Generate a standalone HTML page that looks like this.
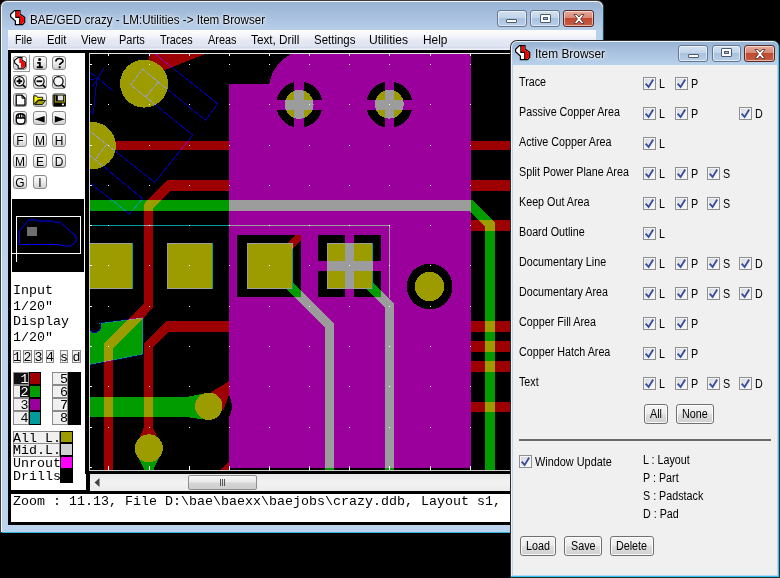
<!DOCTYPE html>
<html><head><meta charset="utf-8"><title>BAE</title>
<style>
html,body{margin:0;padding:0}
body{width:780px;height:578px;overflow:hidden;position:relative;background:#000;font-family:"Liberation Sans",sans-serif}
.a{position:absolute}
.t{position:absolute;white-space:pre;line-height:1;transform-origin:0 0}
.mono{font-family:"Liberation Mono",monospace;font-size:13.33px;color:#000;margin-top:0.8px}
.ms{font-family:"Liberation Sans",sans-serif;font-size:12px;color:#000;transform:scaleX(0.895)}
.seg{font-family:"Liberation Sans",sans-serif;font-size:12px;color:#000}
.tb{position:absolute;box-sizing:border-box;width:14px;height:14px;border:1px solid #8a8a8a;border-radius:3px;background:linear-gradient(#f8f8f8,#efefef 45%,#d0d0d0)}
.cb{position:absolute;box-sizing:border-box;width:13px;height:13px;border:1px solid #8e8f8f;background:linear-gradient(135deg,#cfd4da,#eef0f2 60%,#fff);box-shadow:inset 0 0 0 1px #f4f4f4}
.btn{position:absolute;box-sizing:border-box;border:1px solid #707070;border-radius:3px;background:linear-gradient(#f4f4f4,#ececec 48%,#dedede 52%,#d0d0d0);box-shadow:inset 0 0 0 1px #fcfcfc}
.cap{position:absolute;box-sizing:border-box;border:1px solid #5e6f86;border-radius:3px}
.L>*{mix-blend-mode:lighten}
</style></head><body>

<div class="a" style="left:0;top:0;width:604px;height:533px;border-radius:7px 7px 0 0;background:#3c3c3c"></div>
<div class="a" style="left:1px;top:1px;width:602px;height:531px;border-radius:6px 6px 0 0;background:#f4f8fc"></div>
<div class="a" style="left:2px;top:2px;width:600px;height:530px;border-radius:5px 5px 0 0;background:linear-gradient(#98b3d3 0px,#a7c0de 14px,#b9cfea 29px,#bcd2ec 60px,#bcd3ed 530px)"></div>
<div class="a" style="left:2px;top:532px;width:600px;height:1px;background:#35b5e0"></div>
<div class="a" style="left:602px;top:7px;width:1px;height:526px;background:#7fd0f0"></div>
<svg class="a" style="left:9.5px;top:9.5px" width="16" height="16" viewBox="0 0 16 16"><path d="M4.4,0.6 L10,0.6 L10,4.1 L14.7,7.3 L14.7,12.2 L12.6,14.6 L5.4,14.6 L5.4,11 L0.6,6.8 L0.6,4.2 Z" fill="#fff" stroke="#000" stroke-width="1.2"/><path d="M6.2,1.1 L9.4,1.1 L9.4,4.4 L14.1,7.6 L14.1,12 L12.3,14 L10.1,14 L10.1,6.9 L6.2,6.9 Z" fill="#f00"/><path d="M5.8,0.6 V7.4 H9.7 V14.6" fill="none" stroke="#000" stroke-width="1.1"/></svg>
<div class="t seg" style="left:30px;top:13.6px;transform:scaleX(0.967);text-shadow:0 0 6px #fff,0 0 3px #fff">BAE/GED crazy - LM:Utilities -&gt; Item Browser</div>
<div class="cap" style="left:497px;top:10px;width:30px;height:17px;background:linear-gradient(#d3e1f1 0%,#c3d5ea 45%,#a9c2de 50%,#b9cfe8 100%);border-color:#66788f;box-shadow:inset 0 0 0 1px rgba(255,255,255,.55)"></div><div class="a" style="left:506px;top:19px;width:11px;height:4px;background:#fff;border:1px solid #4c5a6e;box-sizing:border-box;border-radius:1px"></div><div class="cap" style="left:530px;top:10px;width:30px;height:17px;background:linear-gradient(#d3e1f1 0%,#c3d5ea 45%,#a9c2de 50%,#b9cfe8 100%);border-color:#66788f;box-shadow:inset 0 0 0 1px rgba(255,255,255,.55)"></div><div class="a" style="left:540px;top:14px;width:11px;height:9px;background:#fff;border:1px solid #4c5a6e;box-sizing:border-box;border-radius:1px"></div><div class="a" style="left:543px;top:17px;width:5px;height:3px;background:#9fb7d6;border:1px solid #4c5a6e;box-sizing:border-box"></div><div class="cap" style="left:563px;top:10px;width:31px;height:17px;background:linear-gradient(#e6aa9e 0%,#d88976 45%,#c04a31 50%,#c45d45 100%);border-color:#5a2a24;box-shadow:inset 0 0 0 1px rgba(255,255,255,.55)"></div><svg class="a" style="left:571.5px;top:12.5px" width="14" height="12" viewBox="0 0 14 12"><path d="M2,1.5 L4.8,1.5 L7,4 L9.2,1.5 L12,1.5 L8.6,6 L12,10.5 L9.2,10.5 L7,8 L4.8,10.5 L2,10.5 L5.4,6 Z" fill="#fff" stroke="#5b3530" stroke-width="0.9"/></svg>
<div class="a" style="left:8px;top:30px;width:588px;height:20px;background:linear-gradient(#fdfdfe 0,#f4f6fb 6px,#e6eaf5 10px,#dfe4f2 16px,#d3d9ea 18px,#eef1f8 19px,#f4f6fb 20px)"></div>
<div class="t seg" style="left:14.9px;top:33.5px;font-size:12.5px;transform:scaleX(0.844)">File</div>
<div class="t seg" style="left:46.5px;top:33.5px;font-size:12.5px;transform:scaleX(0.901)">Edit</div>
<div class="t seg" style="left:80.9px;top:33.5px;font-size:12.5px;transform:scaleX(0.904)">View</div>
<div class="t seg" style="left:119.2px;top:33.5px;font-size:12.5px;transform:scaleX(0.881)">Parts</div>
<div class="t seg" style="left:159.9px;top:33.5px;font-size:12.5px;transform:scaleX(0.864)">Traces</div>
<div class="t seg" style="left:207.5px;top:33.5px;font-size:12.5px;transform:scaleX(0.870)">Areas</div>
<div class="t seg" style="left:250.9px;top:33.5px;font-size:12.5px;transform:scaleX(0.940)">Text, Drill</div>
<div class="t seg" style="left:313.5px;top:33.5px;font-size:12.5px;transform:scaleX(0.917)">Settings</div>
<div class="t seg" style="left:369.2px;top:33.5px;font-size:12.5px;transform:scaleX(0.968)">Utilities</div>
<div class="t seg" style="left:422.5px;top:33.5px;font-size:12.5px;transform:scaleX(0.949)">Help</div>
<div class="a" style="left:8px;top:50px;width:588px;height:475px;background:#000"></div>
<div class="a" style="left:11px;top:53px;width:74.5px;height:437px;background:#fff"></div>
<div class="a" style="left:11px;top:494px;width:585px;height:28px;background:#fff"></div>
<div class="t mono" style="left:13px;top:494.5px">Zoom : 11.13, File D:\bae\baexx\baejobs\crazy.ddb, Layout s1, (</div>
<div class="a" style="left:13px;top:71px;width:16px;height:1px;background:#9a9a9a"></div><div class="a" style="left:28.5px;top:55px;width:1px;height:17px;background:#9a9a9a"></div>
<div class="tb" style="left:13px;top:56px"></div>
<svg class="a" style="left:13px;top:56px" width="14" height="14" viewBox="0 0 14 14"><path d="M5,1.6 L9,1.6 L9,4.2 L12.4,6.3 L12.4,10.2 L10.5,12.3 L5.2,12.3 L5.2,9.8 L1.6,7 L1.6,4.2 Z" fill="#fff" stroke="#000" stroke-width="1.1"/><path d="M6.3,2.2 L8.5,2.2 L8.5,4.5 L11.9,6.6 L11.9,10 L10.2,11.8 L8,11.8 L8,7 L6.3,7 Z" fill="#f00"/></svg>
<div class="tb" style="left:33px;top:56px"></div>
<svg class="a" style="left:33px;top:56px" width="14" height="14" viewBox="0 0 14 14"><circle cx="6.6" cy="3.6" r="1.5" fill="#000"/><path d="M4.2,6.9 H6.8 V11 M3.8,11.2 H9.8" stroke="#000" stroke-width="1.9" fill="none"/></svg>
<div class="tb" style="left:52px;top:56px"></div>
<svg class="a" style="left:52px;top:56px" width="14" height="14" viewBox="0 0 14 14"><path d="M3.9,5.6 C3.9,1.6 11,1.6 11,5 C11,7.2 7.6,6.6 7.6,9" stroke="#000" stroke-width="1.7" fill="none"/><rect x="6.7" y="10.3" width="1.9" height="1.9" fill="#000"/></svg>
<div class="tb" style="left:13px;top:75px"></div>
<svg class="a" style="left:13px;top:75px" width="14" height="14" viewBox="0 0 14 14"><circle cx="6.4" cy="6.3" r="4.7" fill="#fff" fill-opacity="0.6" stroke="#000" stroke-width="1.2"/><path d="M9.8,9.8 L12.7,12.6" stroke="#000" stroke-width="1.6"/><path d="M3.6,6.3 H9.2 M6.4,3.5 V9.1" stroke="#000" stroke-width="1.9"/></svg>
<div class="tb" style="left:33px;top:75px"></div>
<svg class="a" style="left:33px;top:75px" width="14" height="14" viewBox="0 0 14 14"><circle cx="6.4" cy="6.3" r="4.7" fill="#fff" fill-opacity="0.6" stroke="#000" stroke-width="1.2"/><path d="M9.8,9.8 L12.7,12.6" stroke="#000" stroke-width="1.6"/><path d="M3.6,6.3 H9.2" stroke="#000" stroke-width="1.9"/></svg>
<div class="tb" style="left:52px;top:75px"></div>
<svg class="a" style="left:52px;top:75px" width="14" height="14" viewBox="0 0 14 14"><circle cx="6.4" cy="6.3" r="4.7" fill="#fff" fill-opacity="0.6" stroke="#000" stroke-width="1.2"/><path d="M9.8,9.8 L12.7,12.6" stroke="#000" stroke-width="1.6"/></svg>
<div class="tb" style="left:13px;top:93px"></div>
<svg class="a" style="left:13px;top:93px" width="14" height="14" viewBox="0 0 14 14"><path d="M3.2,2.2 H9 L12,5.2 V12.2 H3.2 Z" fill="#fff" stroke="#000" stroke-width="1.3"/><path d="M9,2.2 V5.2 H12" fill="none" stroke="#000" stroke-width="1"/></svg>
<div class="tb" style="left:33px;top:93px"></div>
<svg class="a" style="left:33px;top:93px" width="14" height="14" viewBox="0 0 14 14"><path d="M0.9,2.8 L3.6,2.8 L4.2,4.3 L9.6,4.3 L9.6,6.6 L4.4,7.2 L0.9,11.6 Z" fill="#ff0" stroke="#000" stroke-width="0.9"/><path d="M2,11.6 L5.4,7.4 L12.6,7.4 L9.3,11.6 Z" fill="#a0a000" stroke="#000" stroke-width="0.9"/></svg>
<div class="tb" style="left:52px;top:93px"></div>
<svg class="a" style="left:52px;top:93px" width="14" height="14" viewBox="0 0 14 14"><rect x="1.3" y="1.5" width="12.5" height="12" fill="#000"/><rect x="2.8" y="2.6" width="10.2" height="7" fill="#a0a000"/><rect x="3.8" y="2.6" width="8.2" height="5.8" fill="#000"/><rect x="5.8" y="2.6" width="5.4" height="4.8" fill="#e4e4e4"/><rect x="9.9" y="10.6" width="2" height="1.7" fill="#fff"/></svg>
<div class="tb" style="left:13px;top:111px"></div>
<svg class="a" style="left:13px;top:111px" width="14" height="14" viewBox="0 0 14 14"><path d="M3.3,6 C3.3,1.6 12,1.6 12,6 V10 C12,14 3.3,14 3.3,10 Z" fill="#fff" stroke="#000" stroke-width="1.4"/><path d="M3.3,7 H12 M5.2,3 V7 M7.6,2.4 V7 M10,3 V7" stroke="#000" stroke-width="1.3"/></svg>
<div class="tb" style="left:33px;top:111px"></div>
<svg class="a" style="left:33px;top:111px" width="14" height="14" viewBox="0 0 14 14"><path d="M1.6,8.3 L11.6,5 V11.6 Z" fill="#000"/></svg>
<div class="tb" style="left:52px;top:111px"></div>
<svg class="a" style="left:52px;top:111px" width="14" height="14" viewBox="0 0 14 14"><path d="M12.8,8.3 L2.8,5 V11.6 Z" fill="#000"/></svg>
<div class="tb" style="left:13px;top:133px"></div>
<div class="t" style="left:16.3352px;top:134.5px;font-size:12px;color:#000">F</div>
<div class="tb" style="left:33px;top:133px"></div>
<div class="t" style="left:35.0016px;top:134.5px;font-size:12px;color:#000">M</div>
<div class="tb" style="left:52px;top:133px"></div>
<div class="t" style="left:54.6672px;top:134.5px;font-size:12px;color:#000">H</div>
<div class="tb" style="left:13px;top:154px"></div>
<div class="t" style="left:15.0016px;top:155.5px;font-size:12px;color:#000">M</div>
<div class="tb" style="left:33px;top:154px"></div>
<div class="t" style="left:35.9977px;top:155.5px;font-size:12px;color:#000">E</div>
<div class="tb" style="left:52px;top:154px"></div>
<div class="t" style="left:54.6672px;top:155.5px;font-size:12px;color:#000">D</div>
<div class="tb" style="left:13px;top:175px"></div>
<div class="t" style="left:15.3328px;top:176.5px;font-size:12px;color:#000">G</div>
<div class="tb" style="left:33px;top:175px"></div>
<div class="t" style="left:38.3328px;top:176.5px;font-size:12px;color:#000">I</div>
<svg class="a" style="left:11px;top:199px" width="75" height="74" viewBox="11 199 75 74" shape-rendering="crispEdges"><rect x="12" y="199" width="72" height="73" fill="#000"/><path d="M12,253.5 H80.5 V216.5 H16.5 V261.5" fill="none" stroke="#fff" stroke-width="1"/><rect x="27" y="227" width="10" height="9" fill="#6e6e6e"/><path d="M19.5,230.6 L28.5,220 L36.6,220 L37.5,221 L52.8,221 L54,222.2 L60.5,222.2 L71.5,232.6 L75,234.7 L76.4,238.8 L75.6,242 L70.7,246 L65.9,246 L57.7,244.5 L19.5,244.5 Z" fill="none" stroke="#0000ff" stroke-width="1" shape-rendering="auto"/></svg>
<div class="t mono" style="left:13px;top:283.6px">Input</div>
<div class="t mono" style="left:13px;top:299px">1/20"</div>
<div class="t mono" style="left:13px;top:314.5px">Display</div>
<div class="t mono" style="left:13px;top:330.2px">1/20"</div>
<div class="a" style="left:13px;top:350px;width:8px;height:13px;box-sizing:border-box;border:1px solid #8a8a8a;background:#f0f0f0"></div>
<div class="t mono" style="left:13px;top:350px">1</div>
<div class="a" style="left:23px;top:350px;width:9px;height:13px;box-sizing:border-box;border:1px solid #8a8a8a;background:#f0f0f0"></div>
<div class="t mono" style="left:23.5px;top:350px">2</div>
<div class="a" style="left:34px;top:350px;width:9px;height:13px;box-sizing:border-box;border:1px solid #8a8a8a;background:#f0f0f0"></div>
<div class="t mono" style="left:34.5px;top:350px">3</div>
<div class="a" style="left:46px;top:350px;width:8px;height:13px;box-sizing:border-box;border:1px solid #8a8a8a;background:#f0f0f0"></div>
<div class="t mono" style="left:46px;top:350px">4</div>
<div class="a" style="left:60px;top:350px;width:8px;height:13px;box-sizing:border-box;border:1px solid #8a8a8a;background:#f0f0f0"></div>
<div class="t mono" style="left:60px;top:350px">s</div>
<div class="a" style="left:72px;top:350px;width:9px;height:13px;box-sizing:border-box;border:1px solid #8a8a8a;background:#f0f0f0"></div>
<div class="t mono" style="left:72.5px;top:350px">d</div>
<div class="a" style="left:13px;top:372px;width:16px;height:13px;box-sizing:border-box;border:1px solid #8a8a8a;background:#101010"></div>
<div class="t mono" style="left:20.5px;top:372.5px;color:#fff">1</div>
<div class="a" style="left:29px;top:372px;width:12px;height:13px;background:#9c0000;box-shadow:inset 0 0 0 1px #000"></div>
<div class="a" style="left:52px;top:372px;width:16px;height:13px;box-sizing:border-box;border:1px solid #8a8a8a;background:#f0f0f0"></div>
<div class="t mono" style="left:60px;top:372.5px">5</div>
<div class="a" style="left:68px;top:372px;width:13px;height:13px;background:#000"></div>
<div class="a" style="left:13px;top:385px;width:16px;height:13px;box-sizing:border-box;border:1px solid #8a8a8a;background:#f0f0f0"></div>
<div class="a" style="left:20px;top:386px;width:9px;height:11px;background:#101010"></div>
<div class="t mono" style="left:20.5px;top:385.5px;color:#fff">2</div>
<div class="a" style="left:29px;top:385px;width:12px;height:13px;background:#009c00;box-shadow:inset 0 0 0 1px #000"></div>
<div class="a" style="left:52px;top:385px;width:16px;height:13px;box-sizing:border-box;border:1px solid #8a8a8a;background:#f0f0f0"></div>
<div class="t mono" style="left:60px;top:385.5px">6</div>
<div class="a" style="left:68px;top:385px;width:13px;height:13px;background:#000"></div>
<div class="a" style="left:13px;top:398px;width:16px;height:13px;box-sizing:border-box;border:1px solid #8a8a8a;background:#f0f0f0"></div>
<div class="t mono" style="left:20.5px;top:398.5px;color:#000">3</div>
<div class="a" style="left:29px;top:398px;width:12px;height:13px;background:#9c009c;box-shadow:inset 0 0 0 1px #000"></div>
<div class="a" style="left:52px;top:398px;width:16px;height:13px;box-sizing:border-box;border:1px solid #8a8a8a;background:#f0f0f0"></div>
<div class="t mono" style="left:60px;top:398.5px">7</div>
<div class="a" style="left:68px;top:398px;width:13px;height:13px;background:#000"></div>
<div class="a" style="left:13px;top:411px;width:16px;height:14px;box-sizing:border-box;border:1px solid #8a8a8a;background:#f0f0f0"></div>
<div class="t mono" style="left:20.5px;top:411.5px;color:#000">4</div>
<div class="a" style="left:29px;top:411px;width:12px;height:14px;background:#009c9c;box-shadow:inset 0 0 0 1px #000"></div>
<div class="a" style="left:52px;top:411px;width:16px;height:14px;box-sizing:border-box;border:1px solid #8a8a8a;background:#f0f0f0"></div>
<div class="t mono" style="left:60px;top:411.5px">8</div>
<div class="a" style="left:68px;top:411px;width:13px;height:14px;background:#000"></div>
<div class="a" style="left:13px;top:431px;width:47px;height:13px;box-sizing:border-box;border:1px solid #8a8a8a;background:#f0f0f0"></div>
<div class="t mono" style="left:13px;top:431.2px">All L.</div>
<div class="a" style="left:60px;top:431px;width:13px;height:12px;background:#9c9c00;box-shadow:inset 0 0 0 1px #000"></div>
<div class="a" style="left:13px;top:443px;width:47px;height:14px;box-sizing:border-box;border:1px solid #8a8a8a;background:#f0f0f0"></div>
<div class="t mono" style="left:13px;top:443.2px">Mid.L.</div>
<div class="a" style="left:60px;top:443px;width:13px;height:13px;background:#d0d0d0;box-shadow:inset 0 0 0 1px #000"></div>
<div class="t mono" style="left:13px;top:456.2px">Unrout</div>
<div class="a" style="left:60px;top:456px;width:13px;height:13px;background:#ff00ff;box-shadow:inset 0 0 0 1px #000"></div>
<div class="t mono" style="left:13px;top:469.2px">Drills</div>
<div class="a" style="left:60px;top:469px;width:13px;height:14px;background:#000;box-shadow:inset 0 0 0 1px #000"></div>
<svg class="a" style="left:85px;top:50px" width="511" height="424" viewBox="85 50 511 424" shape-rendering="crispEdges"><rect x="85" y="50" width="511" height="424" fill="#000"/><clipPath id="cv"><rect x="90" y="54" width="506" height="416"/></clipPath><g class="L" style="isolation:isolate" clip-path="url(#cv)"><rect x="89" y="53" width="507" height="418" fill="#000"/><g transform="scale(1,1.16)" style="mix-blend-mode:lighten"><polyline points="88,177.16 470.8,177.16 490,193.71 490,406.90" fill="none" stroke="#009c00" stroke-width="9.2" stroke-linejoin="miter"/></g><path d="M89,324.6 L142.7,317.7 L142.7,354.4 L89,364.9 Z" fill="#009c00"/><path d="M89,324.6 L142.7,317.7 L142.7,354.4 L89,364.9" fill="none" stroke="#0000a4" stroke-width="1" shape-rendering="auto"/><rect x="90" y="397" width="100" height="20" fill="#009c00"/><path d="M186,397 L208.8,392.5 L208.8,420 L186,417 Z" fill="#009c00"/><path d="M135.5,452 L162,452 L153.3,470 L144.3,470 Z" fill="#009c00"/><g transform="scale(1,1.16)" style="mix-blend-mode:lighten"><polyline points="287,244.22 329.6,280.95 329.6,406.90" fill="none" stroke="#009c00" stroke-width="8.6" stroke-linejoin="miter"/></g><g transform="scale(1,1.16)" style="mix-blend-mode:lighten"><polyline points="367,244.22 389.6,263.71 389.6,406.90" fill="none" stroke="#009c00" stroke-width="8.6" stroke-linejoin="miter"/></g><path d="M149,54 L205,54 L160,72 L149,62 Z" fill="#9c0000"/><rect x="110" y="141" width="119.2" height="9" fill="#9c0000"/><g transform="scale(1,1.16)" style="mix-blend-mode:lighten"><polyline points="229.2,160.09 168.5,160.09 148.4,178.02 148.4,263.53 108.4,298.28 108.4,406.90" fill="none" stroke="#9c0000" stroke-width="9" stroke-linejoin="miter"/></g><g transform="scale(1,1.16)" style="mix-blend-mode:lighten"><polyline points="229.2,281.55 167.5,281.55 148.4,298.02 148.4,379.31" fill="none" stroke="#9c0000" stroke-width="9" stroke-linejoin="miter"/></g><rect x="470.6" y="141" width="126" height="9" fill="#9c0000"/><rect x="470.6" y="180" width="126" height="10.6" fill="#9c0000"/><rect x="470.6" y="220.2" width="126" height="10.8" fill="#9c0000"/><rect x="470.6" y="321.3" width="126" height="10.7" fill="#9c0000"/><rect x="470.6" y="340.7" width="126" height="11" fill="#9c0000"/><rect x="470.6" y="361" width="126" height="10.7" fill="#9c0000"/><rect x="470.6" y="402" width="126" height="9.8" fill="#9c0000"/><path d="M211,392.3 L229.2,381 L229.2,394 L223.5,410 Z" fill="#9c0000"/><path d="M220,470 L229.2,461 L229.2,470 Z" fill="#9c0000"/><path d="M144,427 L152.8,427 L162,447 L135.5,447 Z" fill="#9c0000"/><path d="M285,245 L297,233 L304,237.1 L290,251.1 Z" fill="#9c0000" clip-path="url(#p3c)"/><path d="M229.2,84 L269.2,84 A41.5,41.5 0 0 1 291.2,54 L470.6,54 L470.6,467.5 L229.2,467.5 L229.2,416.9 A23,23 0 0 0 229.2,395.7 Z M276.2,104.6 a23.2,23.2 0 1 0 46.4,0 a23.2,23.2 0 1 0 -46.4,0 Z M366.2,104.6 a23.2,23.2 0 1 0 46.4,0 a23.2,23.2 0 1 0 -46.4,0 Z M406.7,286.5 a22.9,22.9 0 1 0 45.8,0 a22.9,22.9 0 1 0 -45.8,0 Z M237.2,234.8 H301.2 V297 H237.2 Z M318,234.8 H381.3 V297 H318 Z" fill="#9c009c" fill-rule="evenodd"/><clipPath id="c1"><circle cx="299.4" cy="104.6" r="23.2"/></clipPath><clipPath id="c2"><circle cx="389.4" cy="104.6" r="23.2"/></clipPath><clipPath id="p3c"><rect x="237.2" y="234.8" width="64" height="62.2"/></clipPath><g id="sc1" style="mix-blend-mode:lighten"><rect x="294" y="80.5" width="10" height="48" fill="#9c009c"/><rect x="275.4" y="99.6" width="48" height="10.4" fill="#9c009c"/></g><g id="sc2" style="mix-blend-mode:lighten"><rect x="385" y="80.5" width="9" height="48" fill="#9c009c"/><rect x="365.4" y="99.6" width="48" height="10.4" fill="#9c009c"/></g><rect x="345" y="234.8" width="9.4" height="62.2" fill="#9c009c"/><rect x="318" y="261" width="63.3" height="10.2" fill="#9c009c"/><circle cx="144.1" cy="83.6" r="24" fill="#9c9c00"/><circle cx="92.3" cy="145.6" r="23.6" fill="#9c9c00"/><circle cx="208.8" cy="406.3" r="13.7" fill="#9c9c00"/><circle cx="148.8" cy="448.3" r="14" fill="#9c9c00"/><circle cx="429.6" cy="286.5" r="14.7" fill="#9c9c00"/><circle cx="299.2" cy="104.4" r="14.4" fill="#9c9c00"/><circle cx="389.3" cy="104.2" r="14.4" fill="#9c9c00"/><rect x="87" y="243" width="44.6" height="46" fill="#9c9c00"/><path d="M87.5,243.5 H132.1 V288.5 H87.5 Z" fill="none" stroke="#009c9c" stroke-width="1"/><rect x="167" y="243" width="44.6" height="46" fill="#9c9c00"/><path d="M167.5,243.5 H212.1 V288.5 H167.5 Z" fill="none" stroke="#009c9c" stroke-width="1"/><rect x="247.4" y="243" width="44.6" height="46" fill="#9c9c00"/><path d="M247.9,243.5 H292.5 V288.5 H247.9 Z" fill="none" stroke="#009c9c" stroke-width="1"/><rect x="327.3" y="243" width="44.6" height="46" fill="#9c9c00"/><path d="M327.8,243.5 H372.4 V288.5 H327.8 Z" fill="none" stroke="#009c9c" stroke-width="1"/><path d="M90,225.5 H389.8 V297.5" fill="none" stroke="#009c9c" stroke-width="1"/><path d="M154.8,53.7 L217.7,103.8 L205.4,120.2 L142.5,69.1 L130.8,84.9 L192.7,135.2 L154.8,182.3 L91,132" fill="none" stroke="#0000a4" stroke-width="1"/><path d="M157.8,82.5 L145.5,97.2" fill="none" stroke="#0000a4" stroke-width="1"/><path d="M106.2,144.8 L95.3,159.7 L90,155.6" fill="none" stroke="#0000a4" stroke-width="1"/><path d="M95.3,159.7 L142.5,198.7 L129.5,214 L90,183" fill="none" stroke="#0000a4" stroke-width="1"/><path d="M90.2,72.2 L112.7,90.7" fill="none" stroke="#0000a4" stroke-width="1"/><path d="M104,68.5 L92,87" fill="none" stroke="#0000a4" stroke-width="1"/><path d="M90,79.8 L97,78.4 L93.2,113.6 L90,111.6" fill="none" stroke="#0000a4" stroke-width="1"/></g><circle cx="94.3" cy="326.3" r="5.8" fill="#000"/><path d="M100,323.5 A5.8,5.8 0 0 1 89,329" fill="none" stroke="#0000a4" stroke-width="1"/><path d="M89.5,53 V470.5 H596" fill="none" stroke="#d0d0d0" stroke-width="1"/><path d="M89,53.5 H596" fill="none" stroke="#e8e8e8" stroke-width="1"/><path d="M108,64h1v1h-1zM108,104h1v1h-1zM108,145h1v1h-1zM108,185h1v1h-1zM108,225h1v1h-1zM108,265h1v1h-1zM108,306h1v1h-1zM108,346h1v1h-1zM108,386h1v1h-1zM108,427h1v1h-1zM108,467h1v1h-1zM108,54h1v2h-1zM108,466h1v4h-1zM149,64h1v1h-1zM149,104h1v1h-1zM149,145h1v1h-1zM149,185h1v1h-1zM149,225h1v1h-1zM149,265h1v1h-1zM149,306h1v1h-1zM149,346h1v1h-1zM149,386h1v1h-1zM149,427h1v1h-1zM149,467h1v1h-1zM149,54h1v2h-1zM149,466h1v4h-1zM189,64h1v1h-1zM189,104h1v1h-1zM189,145h1v1h-1zM189,185h1v1h-1zM189,225h1v1h-1zM189,265h1v1h-1zM189,306h1v1h-1zM189,346h1v1h-1zM189,386h1v1h-1zM189,427h1v1h-1zM189,467h1v1h-1zM189,54h1v2h-1zM189,466h1v4h-1zM229,64h1v1h-1zM229,104h1v1h-1zM229,145h1v1h-1zM229,185h1v1h-1zM229,225h1v1h-1zM229,265h1v1h-1zM229,306h1v1h-1zM229,346h1v1h-1zM229,386h1v1h-1zM229,427h1v1h-1zM229,467h1v1h-1zM229,54h1v2h-1zM229,466h1v4h-1zM269,64h1v1h-1zM269,104h1v1h-1zM269,145h1v1h-1zM269,185h1v1h-1zM269,225h1v1h-1zM269,265h1v1h-1zM269,306h1v1h-1zM269,346h1v1h-1zM269,386h1v1h-1zM269,427h1v1h-1zM269,467h1v1h-1zM269,54h1v2h-1zM269,466h1v4h-1zM309,64h1v1h-1zM309,104h1v1h-1zM309,145h1v1h-1zM309,185h1v1h-1zM309,225h1v1h-1zM309,265h1v1h-1zM309,306h1v1h-1zM309,346h1v1h-1zM309,386h1v1h-1zM309,427h1v1h-1zM309,467h1v1h-1zM309,54h1v2h-1zM309,466h1v4h-1zM349,64h1v1h-1zM349,104h1v1h-1zM349,145h1v1h-1zM349,185h1v1h-1zM349,225h1v1h-1zM349,265h1v1h-1zM349,306h1v1h-1zM349,346h1v1h-1zM349,386h1v1h-1zM349,427h1v1h-1zM349,467h1v1h-1zM349,54h1v2h-1zM349,466h1v4h-1zM389,64h1v1h-1zM389,104h1v1h-1zM389,145h1v1h-1zM389,185h1v1h-1zM389,225h1v1h-1zM389,265h1v1h-1zM389,306h1v1h-1zM389,346h1v1h-1zM389,386h1v1h-1zM389,427h1v1h-1zM389,467h1v1h-1zM389,54h1v2h-1zM389,466h1v4h-1zM430,64h1v1h-1zM430,104h1v1h-1zM430,145h1v1h-1zM430,185h1v1h-1zM430,225h1v1h-1zM430,265h1v1h-1zM430,306h1v1h-1zM430,346h1v1h-1zM430,386h1v1h-1zM430,427h1v1h-1zM430,467h1v1h-1zM430,54h1v2h-1zM430,466h1v4h-1zM470,64h1v1h-1zM470,104h1v1h-1zM470,145h1v1h-1zM470,185h1v1h-1zM470,225h1v1h-1zM470,265h1v1h-1zM470,306h1v1h-1zM470,346h1v1h-1zM470,386h1v1h-1zM470,427h1v1h-1zM470,467h1v1h-1zM470,54h1v2h-1zM470,466h1v4h-1zM510,64h1v1h-1zM510,104h1v1h-1zM510,145h1v1h-1zM510,185h1v1h-1zM510,225h1v1h-1zM510,265h1v1h-1zM510,306h1v1h-1zM510,346h1v1h-1zM510,386h1v1h-1zM510,427h1v1h-1zM510,467h1v1h-1zM510,54h1v2h-1zM510,466h1v4h-1zM550,64h1v1h-1zM550,104h1v1h-1zM550,145h1v1h-1zM550,185h1v1h-1zM550,225h1v1h-1zM550,265h1v1h-1zM550,306h1v1h-1zM550,346h1v1h-1zM550,386h1v1h-1zM550,427h1v1h-1zM550,467h1v1h-1zM550,54h1v2h-1zM550,466h1v4h-1zM590,64h1v1h-1zM590,104h1v1h-1zM590,145h1v1h-1zM590,185h1v1h-1zM590,225h1v1h-1zM590,265h1v1h-1zM590,306h1v1h-1zM590,346h1v1h-1zM590,386h1v1h-1zM590,427h1v1h-1zM590,467h1v1h-1zM590,54h1v2h-1zM590,466h1v4h-1zM90,64h2v1h-2zM90,104h2v1h-2zM90,145h2v1h-2zM90,185h2v1h-2zM90,225h2v1h-2zM90,265h2v1h-2zM90,306h2v1h-2zM90,346h2v1h-2zM90,386h2v1h-2zM90,427h2v1h-2zM90,467h2v1h-2z" fill="#fff"/></svg><div class="a" style="left:90px;top:474px;width:506px;height:17px;background:linear-gradient(#e6e6e6,#f2f2f2 50%,#ececec)"></div><div class="a" style="left:188px;top:475px;width:69px;height:15px;box-sizing:border-box;border:1px solid #8f8f8f;border-radius:2px;background:linear-gradient(#f6f6f6,#e9e9e9 48%,#d6d6d6 52%,#cdcdcd)"></div><div class="a" style="left:220px;top:479px;width:1px;height:7px;background:#555;box-shadow:2px 0 0 #555,4px 0 0 #555"></div><svg class="a" style="left:93px;top:477px" width="8" height="11" viewBox="0 0 8 11"><path d="M6.5,1 L1.5,5.5 L6.5,10 Z" fill="#444"/></svg>
<div class="a" style="left:510px;top:40px;width:270px;height:538px;border-radius:7px 7px 0 0;background:#2a2a2a"></div><div class="a" style="left:511px;top:41px;width:268px;height:536px;box-sizing:border-box;border-right:1px solid #2cc4f0;border-bottom:1px solid #2cc4f0;border-radius:6px 6px 0 0;background:#eef4fb"></div><div class="a" style="left:512px;top:42px;width:266px;height:534px;border-radius:5px 5px 0 0;background:linear-gradient(#98b3d3 0px,#a8c1df 10px,#b8d1eb 23px,#bcd4ee 40px,#bcd4ee 100%)"></div><div class="a" style="left:513px;top:65px;width:264px;height:510px;background:#f0f0f0"></div><svg class="a" style="left:514.5px;top:44.7px" width="16" height="16" viewBox="0 0 16 16"><path d="M4.4,0.6 L10,0.6 L10,4.1 L14.7,7.3 L14.7,12.2 L12.6,14.6 L5.4,14.6 L5.4,11 L0.6,6.8 L0.6,4.2 Z" fill="#fff" stroke="#000" stroke-width="1.2"/><path d="M6.2,1.1 L9.4,1.1 L9.4,4.4 L14.1,7.6 L14.1,12 L12.3,14 L10.1,14 L10.1,6.9 L6.2,6.9 Z" fill="#f00"/><path d="M5.8,0.6 V7.4 H9.7 V14.6" fill="none" stroke="#000" stroke-width="1.1"/></svg><div class="t seg" style="left:535px;top:47.5px;transform:scaleX(0.99);text-shadow:0 0 6px #fff,0 0 3px #fff">Item Browser</div><div class="cap" style="left:678px;top:45px;width:30px;height:17px;background:linear-gradient(#d3e1f1 0%,#c3d5ea 45%,#a9c2de 50%,#b9cfe8 100%);border-color:#66788f;box-shadow:inset 0 0 0 1px rgba(255,255,255,.55)"></div><div class="a" style="left:688px;top:54px;width:11px;height:4px;background:#fff;border:1px solid #4c5a6e;box-sizing:border-box;border-radius:1px"></div><div class="cap" style="left:712px;top:45px;width:29px;height:17px;background:linear-gradient(#d3e1f1 0%,#c3d5ea 45%,#a9c2de 50%,#b9cfe8 100%);border-color:#66788f;box-shadow:inset 0 0 0 1px rgba(255,255,255,.55)"></div><div class="a" style="left:721px;top:48px;width:11px;height:9px;background:#fff;border:1px solid #4c5a6e;box-sizing:border-box;border-radius:1px"></div><div class="a" style="left:724px;top:51px;width:5px;height:3px;background:#9fb7d6;border:1px solid #4c5a6e;box-sizing:border-box"></div><div class="cap" style="left:744px;top:45px;width:31px;height:17px;background:linear-gradient(#e6aa9e 0%,#d88976 45%,#c04a31 50%,#c45d45 100%);border-color:#5a2a24;box-shadow:inset 0 0 0 1px rgba(255,255,255,.55)"></div><svg class="a" style="left:752.5px;top:47.5px" width="14" height="12" viewBox="0 0 14 12"><path d="M2,1.5 L4.8,1.5 L7,4 L9.2,1.5 L12,1.5 L8.6,6 L12,10.5 L9.2,10.5 L7,8 L4.8,10.5 L2,10.5 L5.4,6 Z" fill="#fff" stroke="#5b3530" stroke-width="0.9"/></svg><div class="t ms" style="left:518.8px;top:76px">Trace</div><div class="cb" style="left:643px;top:77px"></div><svg class="a" style="left:643px;top:77px" width="13" height="13" viewBox="0 0 13 13"><path d="M3.3,7.4 L5.6,9.9 L9.7,3.2" fill="none" stroke="#3a4f9a" stroke-width="1.9" stroke-linecap="square"/></svg><div class="t ms" style="left:659.3px;top:77.8px">L</div><div class="cb" style="left:675px;top:77px"></div><svg class="a" style="left:675px;top:77px" width="13" height="13" viewBox="0 0 13 13"><path d="M3.3,7.4 L5.6,9.9 L9.7,3.2" fill="none" stroke="#3a4f9a" stroke-width="1.9" stroke-linecap="square"/></svg><div class="t ms" style="left:691.3px;top:77.8px">P</div><div class="t ms" style="left:518.8px;top:106px">Passive Copper Area</div><div class="cb" style="left:643px;top:107px"></div><svg class="a" style="left:643px;top:107px" width="13" height="13" viewBox="0 0 13 13"><path d="M3.3,7.4 L5.6,9.9 L9.7,3.2" fill="none" stroke="#3a4f9a" stroke-width="1.9" stroke-linecap="square"/></svg><div class="t ms" style="left:659.3px;top:107.8px">L</div><div class="cb" style="left:675px;top:107px"></div><svg class="a" style="left:675px;top:107px" width="13" height="13" viewBox="0 0 13 13"><path d="M3.3,7.4 L5.6,9.9 L9.7,3.2" fill="none" stroke="#3a4f9a" stroke-width="1.9" stroke-linecap="square"/></svg><div class="t ms" style="left:691.3px;top:107.8px">P</div><div class="cb" style="left:739px;top:107px"></div><svg class="a" style="left:739px;top:107px" width="13" height="13" viewBox="0 0 13 13"><path d="M3.3,7.4 L5.6,9.9 L9.7,3.2" fill="none" stroke="#3a4f9a" stroke-width="1.9" stroke-linecap="square"/></svg><div class="t ms" style="left:755.3px;top:107.8px">D</div><div class="t ms" style="left:518.8px;top:136px">Active Copper Area</div><div class="cb" style="left:643px;top:137px"></div><svg class="a" style="left:643px;top:137px" width="13" height="13" viewBox="0 0 13 13"><path d="M3.3,7.4 L5.6,9.9 L9.7,3.2" fill="none" stroke="#3a4f9a" stroke-width="1.9" stroke-linecap="square"/></svg><div class="t ms" style="left:659.3px;top:137.8px">L</div><div class="t ms" style="left:518.8px;top:166px">Split Power Plane Area</div><div class="cb" style="left:643px;top:167px"></div><svg class="a" style="left:643px;top:167px" width="13" height="13" viewBox="0 0 13 13"><path d="M3.3,7.4 L5.6,9.9 L9.7,3.2" fill="none" stroke="#3a4f9a" stroke-width="1.9" stroke-linecap="square"/></svg><div class="t ms" style="left:659.3px;top:167.8px">L</div><div class="cb" style="left:675px;top:167px"></div><svg class="a" style="left:675px;top:167px" width="13" height="13" viewBox="0 0 13 13"><path d="M3.3,7.4 L5.6,9.9 L9.7,3.2" fill="none" stroke="#3a4f9a" stroke-width="1.9" stroke-linecap="square"/></svg><div class="t ms" style="left:691.3px;top:167.8px">P</div><div class="cb" style="left:707px;top:167px"></div><svg class="a" style="left:707px;top:167px" width="13" height="13" viewBox="0 0 13 13"><path d="M3.3,7.4 L5.6,9.9 L9.7,3.2" fill="none" stroke="#3a4f9a" stroke-width="1.9" stroke-linecap="square"/></svg><div class="t ms" style="left:723.3px;top:167.8px">S</div><div class="t ms" style="left:518.8px;top:196px">Keep Out Area</div><div class="cb" style="left:643px;top:197px"></div><svg class="a" style="left:643px;top:197px" width="13" height="13" viewBox="0 0 13 13"><path d="M3.3,7.4 L5.6,9.9 L9.7,3.2" fill="none" stroke="#3a4f9a" stroke-width="1.9" stroke-linecap="square"/></svg><div class="t ms" style="left:659.3px;top:197.8px">L</div><div class="cb" style="left:675px;top:197px"></div><svg class="a" style="left:675px;top:197px" width="13" height="13" viewBox="0 0 13 13"><path d="M3.3,7.4 L5.6,9.9 L9.7,3.2" fill="none" stroke="#3a4f9a" stroke-width="1.9" stroke-linecap="square"/></svg><div class="t ms" style="left:691.3px;top:197.8px">P</div><div class="cb" style="left:707px;top:197px"></div><svg class="a" style="left:707px;top:197px" width="13" height="13" viewBox="0 0 13 13"><path d="M3.3,7.4 L5.6,9.9 L9.7,3.2" fill="none" stroke="#3a4f9a" stroke-width="1.9" stroke-linecap="square"/></svg><div class="t ms" style="left:723.3px;top:197.8px">S</div><div class="t ms" style="left:518.8px;top:226px">Board Outline</div><div class="cb" style="left:643px;top:227px"></div><svg class="a" style="left:643px;top:227px" width="13" height="13" viewBox="0 0 13 13"><path d="M3.3,7.4 L5.6,9.9 L9.7,3.2" fill="none" stroke="#3a4f9a" stroke-width="1.9" stroke-linecap="square"/></svg><div class="t ms" style="left:659.3px;top:227.8px">L</div><div class="t ms" style="left:518.8px;top:256px">Documentary Line</div><div class="cb" style="left:643px;top:257px"></div><svg class="a" style="left:643px;top:257px" width="13" height="13" viewBox="0 0 13 13"><path d="M3.3,7.4 L5.6,9.9 L9.7,3.2" fill="none" stroke="#3a4f9a" stroke-width="1.9" stroke-linecap="square"/></svg><div class="t ms" style="left:659.3px;top:257.8px">L</div><div class="cb" style="left:675px;top:257px"></div><svg class="a" style="left:675px;top:257px" width="13" height="13" viewBox="0 0 13 13"><path d="M3.3,7.4 L5.6,9.9 L9.7,3.2" fill="none" stroke="#3a4f9a" stroke-width="1.9" stroke-linecap="square"/></svg><div class="t ms" style="left:691.3px;top:257.8px">P</div><div class="cb" style="left:707px;top:257px"></div><svg class="a" style="left:707px;top:257px" width="13" height="13" viewBox="0 0 13 13"><path d="M3.3,7.4 L5.6,9.9 L9.7,3.2" fill="none" stroke="#3a4f9a" stroke-width="1.9" stroke-linecap="square"/></svg><div class="t ms" style="left:723.3px;top:257.8px">S</div><div class="cb" style="left:739px;top:257px"></div><svg class="a" style="left:739px;top:257px" width="13" height="13" viewBox="0 0 13 13"><path d="M3.3,7.4 L5.6,9.9 L9.7,3.2" fill="none" stroke="#3a4f9a" stroke-width="1.9" stroke-linecap="square"/></svg><div class="t ms" style="left:755.3px;top:257.8px">D</div><div class="t ms" style="left:518.8px;top:286px">Documentary Area</div><div class="cb" style="left:643px;top:287px"></div><svg class="a" style="left:643px;top:287px" width="13" height="13" viewBox="0 0 13 13"><path d="M3.3,7.4 L5.6,9.9 L9.7,3.2" fill="none" stroke="#3a4f9a" stroke-width="1.9" stroke-linecap="square"/></svg><div class="t ms" style="left:659.3px;top:287.8px">L</div><div class="cb" style="left:675px;top:287px"></div><svg class="a" style="left:675px;top:287px" width="13" height="13" viewBox="0 0 13 13"><path d="M3.3,7.4 L5.6,9.9 L9.7,3.2" fill="none" stroke="#3a4f9a" stroke-width="1.9" stroke-linecap="square"/></svg><div class="t ms" style="left:691.3px;top:287.8px">P</div><div class="cb" style="left:707px;top:287px"></div><svg class="a" style="left:707px;top:287px" width="13" height="13" viewBox="0 0 13 13"><path d="M3.3,7.4 L5.6,9.9 L9.7,3.2" fill="none" stroke="#3a4f9a" stroke-width="1.9" stroke-linecap="square"/></svg><div class="t ms" style="left:723.3px;top:287.8px">S</div><div class="cb" style="left:739px;top:287px"></div><svg class="a" style="left:739px;top:287px" width="13" height="13" viewBox="0 0 13 13"><path d="M3.3,7.4 L5.6,9.9 L9.7,3.2" fill="none" stroke="#3a4f9a" stroke-width="1.9" stroke-linecap="square"/></svg><div class="t ms" style="left:755.3px;top:287.8px">D</div><div class="t ms" style="left:518.8px;top:316px">Copper Fill Area</div><div class="cb" style="left:643px;top:317px"></div><svg class="a" style="left:643px;top:317px" width="13" height="13" viewBox="0 0 13 13"><path d="M3.3,7.4 L5.6,9.9 L9.7,3.2" fill="none" stroke="#3a4f9a" stroke-width="1.9" stroke-linecap="square"/></svg><div class="t ms" style="left:659.3px;top:317.8px">L</div><div class="cb" style="left:675px;top:317px"></div><svg class="a" style="left:675px;top:317px" width="13" height="13" viewBox="0 0 13 13"><path d="M3.3,7.4 L5.6,9.9 L9.7,3.2" fill="none" stroke="#3a4f9a" stroke-width="1.9" stroke-linecap="square"/></svg><div class="t ms" style="left:691.3px;top:317.8px">P</div><div class="t ms" style="left:518.8px;top:346px">Copper Hatch Area</div><div class="cb" style="left:643px;top:347px"></div><svg class="a" style="left:643px;top:347px" width="13" height="13" viewBox="0 0 13 13"><path d="M3.3,7.4 L5.6,9.9 L9.7,3.2" fill="none" stroke="#3a4f9a" stroke-width="1.9" stroke-linecap="square"/></svg><div class="t ms" style="left:659.3px;top:347.8px">L</div><div class="cb" style="left:675px;top:347px"></div><svg class="a" style="left:675px;top:347px" width="13" height="13" viewBox="0 0 13 13"><path d="M3.3,7.4 L5.6,9.9 L9.7,3.2" fill="none" stroke="#3a4f9a" stroke-width="1.9" stroke-linecap="square"/></svg><div class="t ms" style="left:691.3px;top:347.8px">P</div><div class="t ms" style="left:518.8px;top:376px">Text</div><div class="cb" style="left:643px;top:377px"></div><svg class="a" style="left:643px;top:377px" width="13" height="13" viewBox="0 0 13 13"><path d="M3.3,7.4 L5.6,9.9 L9.7,3.2" fill="none" stroke="#3a4f9a" stroke-width="1.9" stroke-linecap="square"/></svg><div class="t ms" style="left:659.3px;top:377.8px">L</div><div class="cb" style="left:675px;top:377px"></div><svg class="a" style="left:675px;top:377px" width="13" height="13" viewBox="0 0 13 13"><path d="M3.3,7.4 L5.6,9.9 L9.7,3.2" fill="none" stroke="#3a4f9a" stroke-width="1.9" stroke-linecap="square"/></svg><div class="t ms" style="left:691.3px;top:377.8px">P</div><div class="cb" style="left:707px;top:377px"></div><svg class="a" style="left:707px;top:377px" width="13" height="13" viewBox="0 0 13 13"><path d="M3.3,7.4 L5.6,9.9 L9.7,3.2" fill="none" stroke="#3a4f9a" stroke-width="1.9" stroke-linecap="square"/></svg><div class="t ms" style="left:723.3px;top:377.8px">S</div><div class="cb" style="left:739px;top:377px"></div><svg class="a" style="left:739px;top:377px" width="13" height="13" viewBox="0 0 13 13"><path d="M3.3,7.4 L5.6,9.9 L9.7,3.2" fill="none" stroke="#3a4f9a" stroke-width="1.9" stroke-linecap="square"/></svg><div class="t ms" style="left:755.3px;top:377.8px">D</div><div class="btn" style="left:644px;top:404px;width:24px;height:20px"></div><div class="t ms" style="left:650.032px;top:407.7px">All</div><div class="btn" style="left:676px;top:404px;width:38px;height:20px"></div><div class="t ms" style="left:682.163px;top:407.7px">None</div><div class="a" style="left:519px;top:439px;width:252px;height:2px;background:#6a6a6a"></div><div class="cb" style="left:519px;top:455px"></div><svg class="a" style="left:519px;top:455px" width="13" height="13" viewBox="0 0 13 13"><path d="M3.3,7.4 L5.6,9.9 L9.7,3.2" fill="none" stroke="#3a4f9a" stroke-width="1.9" stroke-linecap="square"/></svg><div class="t ms" style="left:535.3px;top:456.4px;transform:scaleX(0.907)">Window Update</div><div class="t ms" style="left:643.3px;top:453.8px">L : Layout</div><div class="t ms" style="left:643.3px;top:471.8px">P : Part</div><div class="t ms" style="left:643.3px;top:489.8px">S : Padstack</div><div class="t ms" style="left:643.3px;top:507.8px">D : Pad</div><div class="btn" style="left:520px;top:536px;width:36px;height:20px"></div><div class="t ms" style="left:526.055px;top:539.7px">Load</div><div class="btn" style="left:564px;top:536px;width:38px;height:20px"></div><div class="t ms" style="left:570.76px;top:539.7px">Save</div><div class="btn" style="left:610px;top:536px;width:44px;height:20px"></div><div class="t ms" style="left:616.478px;top:539.7px">Delete</div>
</body></html>
